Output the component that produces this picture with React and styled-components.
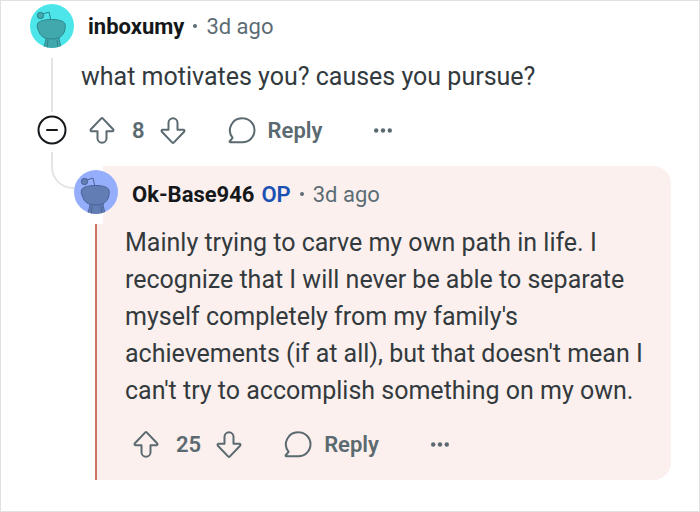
import React from "react";
import styled, { createGlobalStyle } from "styled-components";

const GlobalStyle = createGlobalStyle`
    * {
        box-sizing: border-box;
    }
    body {
        margin: 0;
        background: #fff;
        font-family: Roboto, "Liberation Sans", sans-serif;
    }
`;

const Page = styled.main`
    min-height: 100vh;
    padding: 3px 28px 31px 29px;
    border: 1px solid #e1e1e1;
    background: #fff;
`;

const Comment = styled.article`
    display: grid;
    grid-template-columns: 44px minmax(0, 1fr);
    grid-template-rows: 44px auto 44px auto;
`;

// the tint starts right of the avatar, then widens to meet the thread line
const OwnComment = styled(Comment)`
    padding: 4px 0 14px;
    border-radius: 0 18px 18px 0;
    background:
        linear-gradient(#fbf0ed, #fbf0ed) 29px 0 no-repeat,
        linear-gradient(#fbf0ed, #fbf0ed) 22px 58px no-repeat;
`;

const Avatar = styled.svg`
    display: block;
    width: 44px;
    height: 44px;
`;

const Header = styled.header`
    display: flex;
    align-items: center;
    gap: 7px;
    padding-top: ${props => props.$drop || 0}px;
    padding-left: 14px;
    font-size: 22px;
    color: #5c6c74;
`;

const Author = styled.a`
    font-weight: 700;
    color: #14181a;
    text-decoration: none;
`;

const OpTag = styled.span`
    font-weight: 600;
    color: #1a52b4;
`;

const Dot = styled.span`
    width: 4px;
    height: 4px;
    margin: 0 2px;
    border-radius: 2px;
    background: #5c6c74;
`;

const Body = styled.p`
    grid-column: 2;
    margin: 0;
    padding: 10px 7px 13px;
    font-size: 25px;
    line-height: 37px;
    color: #333a3e;
`;

const ThreadLine = styled.div`
    grid-column: 1;
    grid-row: 2 / span ${props => props.$rows};
    justify-self: center;
    width: 2px;
    margin: 10px 0 ${props => props.$overlap}px;
    background: ${props => props.$color};
`;

const CollapseButton = styled.button`
    grid-column: 1;
    grid-row: 3;
    place-self: center;
    width: 30px;
    height: 30px;
    padding: 0;
    border: 0;
    background: none;
    color: #14181a;
`;

const Elbow = styled.div`
    grid-column: 1;
    grid-row: 4;
    justify-self: end;
    width: 23px;
    height: 37px;
    border: solid #e2e5e6;
    border-width: 0 0 2px 2px;
    border-bottom-left-radius: 22px;
`;

const Actions = styled.div`
    grid-column: 2;
    grid-row: 3;
    display: flex;
    align-items: center;
    padding-left: 14px;
    font-size: 22px;
    font-weight: 600;
    color: #5a6a70;
`;

const Count = styled.span`
    padding: 0 14px 0 16px;
`;

const ActionButton = styled.button`
    display: flex;
    align-items: center;
    gap: 12px;
    padding: 0;
    margin-left: ${props => props.$space || 0}px;
    border: 0;
    background: none;
    font: inherit;
    color: inherit;
`;

const Icon = styled.svg`
    display: block;
    width: ${props => props.$width || 28}px;
    height: 30px;
    fill: none;
    stroke: currentColor;
    stroke-width: 2;
    stroke-linejoin: round;
    stroke-linecap: round;
`;

const Replies = styled.div`
    grid-column: 2;
    grid-row: 4;
    padding-top: 14px;
`;

const Snoo = ({ id, bg, fill, line }) => (
    <Avatar viewBox="0 0 44 44" aria-hidden="true">
        <clipPath id={id}>
            <circle cx="22" cy="22" r="22" />
        </clipPath>
        <g clipPath={`url(#${id})`}>
            <rect width="44" height="44" fill={bg} />
            <g fill={fill} stroke={line} strokeWidth="1" strokeLinejoin="round">
                <path d="M16 32h13c0 5 1 8 3 13H13c2-5 3-8 3-13z" />
                <path d="M18 36l-1 8M27 36l1 8" fill="none" />
                <path d="M21 17l-2-9-6 2" fill="none" />
                <circle cx="10.5" cy="11.5" r="3.2" />
                <path d="M7.500 20c1-3 7-4.500 14-4.500S34 17 35 20c.6 2 .3 4-.5 7-1.300 5-6 8-13 8s-11.500-3-12.500-7.500c-1.500-2.500-2.200-5-1.500-7.500z" />
            </g>
        </g>
    </Avatar>
);

const Arrow = ({ down }) => (
    <Icon viewBox="0 0 28 30" aria-hidden="true">
        <path
            transform={down ? "rotate(180 14 15.5)" : undefined}
            d="M13.300 3.400 2.900 14.300c-.8.800-.3 1.900.8 1.900h5.800v7a4.500 4.500 0 0 0 9 0v-7h5.800c1.100 0 1.600-1.100.8-1.900L14.700 3.400c-.4-.4-1-.4-1.400 0z"
        />
    </Icon>
);

const CommentActions = ({ count }) => (
    <Actions>
        <ActionButton aria-label="Upvote"><Arrow /></ActionButton>
        <Count>{count}</Count>
        <ActionButton aria-label="Downvote"><Arrow down /></ActionButton>
        <ActionButton $space={41}>
            <Icon viewBox="0 0 28 30" aria-hidden="true">
                <path d="M14.500 3.300a12 12 0 0 1 0 24H2.400c-.8 0-1-.8-.5-1.300L4.600 22.800A12 12 0 0 1 14.500 3.300z" />
            </Icon>
            Reply
        </ActionButton>
        <ActionButton $space={52} aria-label="More options">
            <Icon $width={18} viewBox="0 0 18 30" aria-hidden="true">
                <g fill="currentColor" stroke="none">
                    <circle cx="2.200" cy="15.500" r="2.200" />
                    <circle cx="9" cy="15.500" r="2.200" />
                    <circle cx="15.800" cy="15.500" r="2.200" />
                </g>
            </Icon>
        </ActionButton>
    </Actions>
);

export default function App() {
    return (
        <Page>
            <GlobalStyle />
            <Comment>
                <Snoo id="avatar-inboxumy" bg="#4ce6ea" fill="#41a9ae" line="#2c858c" />
                <Header>
                    <Author href="#inboxumy">inboxumy</Author>
                    <Dot />
                    <time>3d ago</time>
                </Header>
                <ThreadLine $rows={1} $overlap={-4} $color="#e2e5e6" />
                <Body>what motivates you? causes you pursue?</Body>
                <CollapseButton aria-label="Collapse thread">
                    <Icon $width={30} viewBox="0 0 30 30" aria-hidden="true">
                        <circle cx="15" cy="15" r="13.500" />
                        <path d="M10 15h10" />
                    </Icon>
                </CollapseButton>
                <CommentActions count={8} />
                <Elbow />
                <Replies>
                    <OwnComment>
                        <Snoo id="avatar-ok-base" bg="#95aefb" fill="#627cb4" line="#4b6298" />
                        <Header $drop={4}>
                            <Author href="#ok-base946">Ok-Base946</Author>
                            <OpTag>OP</OpTag>
                            <Dot />
                            <time>3d ago</time>
                        </Header>
                        <ThreadLine $rows={2} $overlap={-14} $color="#cf7461" />
                        <Body>
                            Mainly trying to carve my own path in life. I recognize that I will never be
                            able to separate myself completely from my family's achievements (if at all),
                            but that doesn't mean I can't try to accomplish something on my own.
                        </Body>
                        <CommentActions count={25} />
                    </OwnComment>
                </Replies>
            </Comment>
        </Page>
    );
}
